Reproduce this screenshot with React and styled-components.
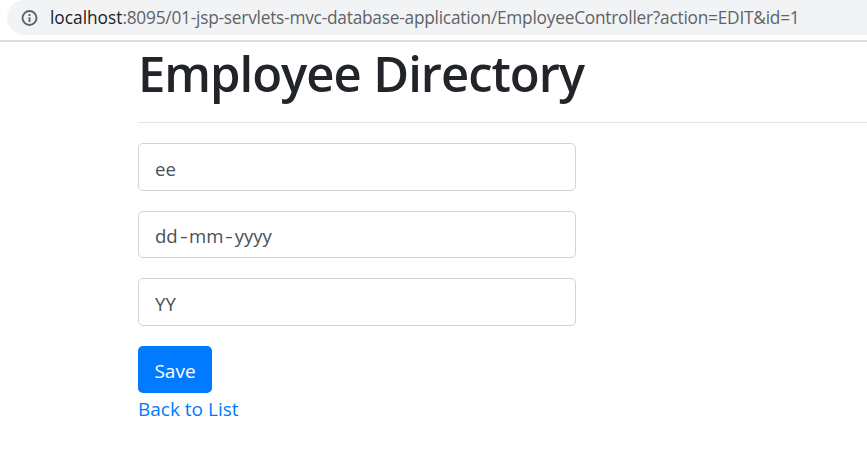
import React from "react";
import styled, { createGlobalStyle } from "styled-components";

const GlobalStyle = createGlobalStyle`
  * { box-sizing: border-box; }
  body {
    margin: 0;
    overflow: hidden;
    background: #fff;
    color: #212529;
    font-family: "Open Sans", "Noto Sans", sans-serif;
  }
`;

const Toolbar = styled.header`
  height: 42px;
  padding-left: 7px;
  border-bottom: 2px solid #dadce0;
`;

const AddressBar = styled.div`
  display: flex;
  align-items: center;
  height: 35px;
  padding-left: 14px;
  background: #f1f3f4;
  border-radius: 18px 0 0 18px;
`;

const Url = styled.span`
  margin-left: 12px;
  font-size: 17.3px;
  line-height: 24px;
  letter-spacing: -0.23px;
  white-space: nowrap;
  color: #5f6368;
`;

const Host = styled.span`
  letter-spacing: 0;
  color: #202124;
`;

const Page = styled.main`
  padding-left: 138px;
`;

const Title = styled.h1`
  margin: 0;
  padding-top: 2px;
  height: 80px;
  font-size: 49px;
  font-weight: 600;
  line-height: 58px;
  letter-spacing: -1.03px;
  word-spacing: 1px;
  white-space: nowrap;
`;

const Divider = styled.hr`
  margin: 0 0 20px;
  border: 0;
  border-top: 1px solid #e5e5e5;
`;

const Form = styled.form`
  display: flex;
  flex-direction: column;
  align-items: flex-start;
`;

const Field = styled.input`
  width: 438px;
  height: ${(p) => p.$height || 48}px;
  margin: 0 0 20px;
  padding: 2px 16px 0;
  border: 1px solid #ced4da;
  border-radius: 5px;
  outline: 0;
  background: #fff;
  color: #495057;
  font: 18.6px "Open Sans", "Noto Sans", sans-serif;
`;

const DateField = styled(Field).attrs({ as: "div" })`
  display: flex;
  align-items: center;
  padding-left: 16px;
  letter-spacing: -0.1px;
`;

const Dash = styled.span`
  width: 11.5px;
  text-align: center;
  transform: scaleX(1.3);
`;

const SaveButton = styled.button`
  width: 74px;
  height: 47px;
  padding: 3px 0 0;
  border: 0;
  border-radius: 5px;
  background: #007bff;
  color: #fff;
  font: 19px "Open Sans", "Noto Sans", sans-serif;
`;

const BackLink = styled.a`
  display: inline-block;
  font-size: 19px;
  line-height: 32px;
  color: #007bff;
  text-decoration: none;
`;

function InfoIcon() {
  return (
    <svg width="17" height="16" viewBox="0 0 17 16" fill="none">
      <circle cx="8.5" cy="8" r="7" stroke="#5f6368" strokeWidth="1.9" />
      <path d="M8.5 4v2M8.5 7.2V12" stroke="#5f6368" strokeWidth="1.9" />
    </svg>
  );
}

export default function App() {
  return (
    <>
      <GlobalStyle />
      <Toolbar>
        <AddressBar>
          <InfoIcon />
          <Url>
            <Host>localhost</Host>
            :8095/01-jsp-servlets-mvc-database-application/EmployeeController?action=EDIT&amp;id=1
          </Url>
        </AddressBar>
      </Toolbar>
      <Page>
        <Title>Employee Directory</Title>
        <Divider />
        <Form>
          <Field defaultValue="ee" />
          <DateField $height={47}>
            dd<Dash>-</Dash>mm<Dash>-</Dash>yyyy
          </DateField>
          <Field defaultValue="YY" />
          <SaveButton type="button">Save</SaveButton>
        </Form>
        <BackLink href="#">Back to List</BackLink>
      </Page>
    </>
  );
}
